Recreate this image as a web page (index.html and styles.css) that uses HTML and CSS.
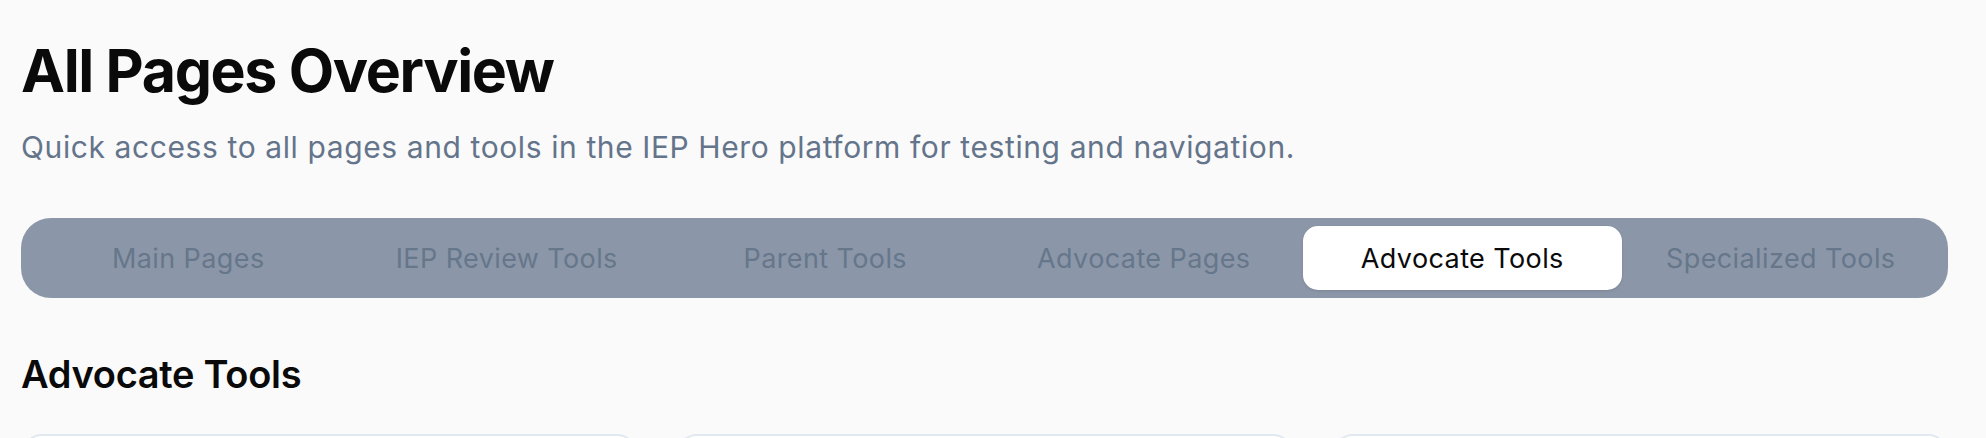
FILE: index.html
```html
<!DOCTYPE html>
<html lang="en">
<head>
<meta charset="utf-8">
<title>All Pages Overview</title>
<link rel="stylesheet" href="styles.css">
</head>
<body>
<main class="page">
  <header class="intro">
    <h1 class="title">All Pages Overview</h1>
    <p class="subtitle">Quick access to all pages and tools in the IEP Hero platform for testing and navigation.</p>
  </header>
  <nav class="tabs">
    <button class="tab">Main Pages</button>
    <button class="tab">IEP Review Tools</button>
    <button class="tab">Parent Tools</button>
    <button class="tab">Advocate Pages</button>
    <button class="tab tab-active">Advocate Tools</button>
    <button class="tab">Specialized Tools</button>
  </nav>
  <section class="section">
    <h2 class="section-title">Advocate Tools</h2>
    <div class="cards">
      <div class="card"></div>
      <div class="card"></div>
      <div class="card"></div>
    </div>
  </section>
</main>
</body>
</html>
```
FILE: styles.css
```css
html, body {
  margin: 0;
  padding: 0;
  overflow: hidden;
  background: #fafafa;
}
body {
  font-family: "Inter", "Noto Sans", "Liberation Sans", sans-serif;
  color: #0a0a0a;
}
.page {
  padding: 38px 38px 0 21px;
}
.intro {
  display: flex;
  flex-direction: column;
  gap: 21px;
}
.title {
  margin: 0;
  font-size: 59px;
  line-height: 66px;
  font-weight: 700;
  letter-spacing: -1.35px;
}
.subtitle {
  margin: 0;
  font-size: 30px;
  line-height: 45px;
  color: #64748b;
  letter-spacing: 0.6px;
}
.tabs {
  margin-top: 48px;
  height: 80px;
  box-sizing: border-box;
  padding: 8px;
  border-radius: 30px;
  background: #8b97a8;
  display: grid;
  grid-template-columns: repeat(6, 1fr);
}
.tab {
  border: none;
  background: transparent;
  font-family: inherit;
  font-size: 27px;
  letter-spacing: 0.4px;
  color: #66768b;
  border-radius: 15px;
  padding: 0;
  cursor: pointer;
}
.tab-active {
  background: #ffffff;
  color: #0a0a0a;
  box-shadow: 0 1px 3px rgba(0, 0, 0, 0.12);
}
.section {
  margin-top: 48px;
}
.section-title {
  margin: 0;
  font-size: 38px;
  line-height: 56px;
  font-weight: 600;
  letter-spacing: -0.3px;
}
.cards {
  margin-top: 32px;
  display: grid;
  grid-template-columns: repeat(3, 1fr);
  gap: 40px;
  padding-left: 1px;
}
.card {
  height: 200px;
  background: #ffffff;
  border: 2px solid #e2e8f0;
  border-radius: 20px;
  box-sizing: border-box;
}
```
